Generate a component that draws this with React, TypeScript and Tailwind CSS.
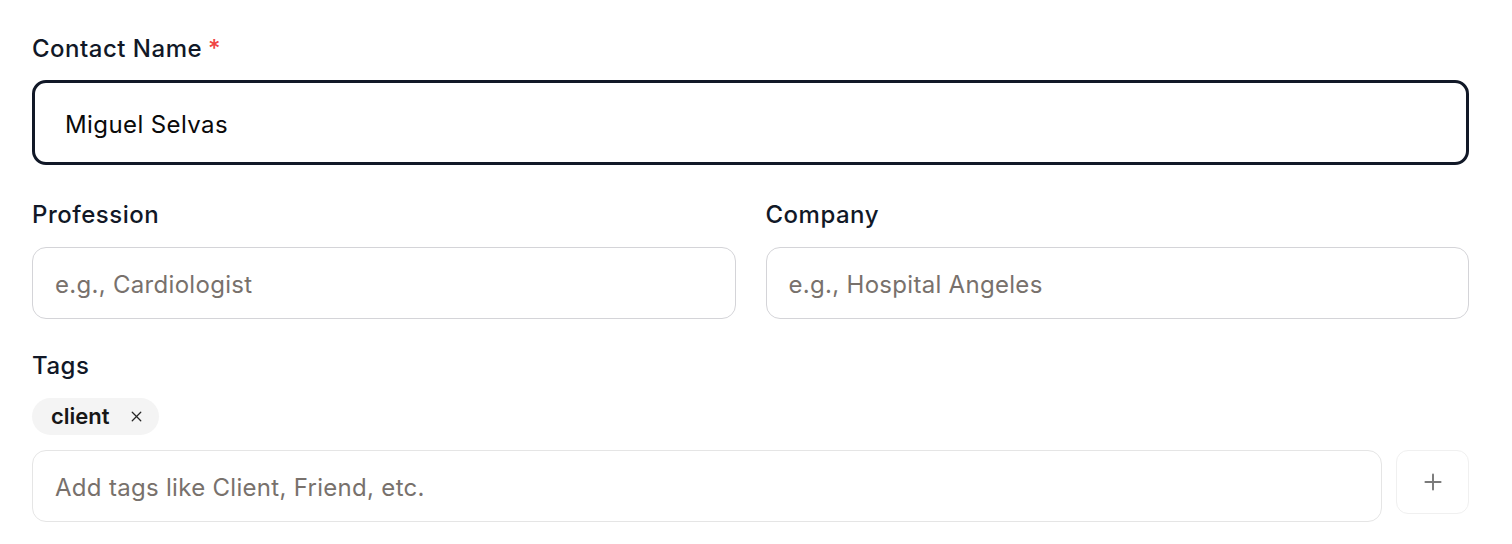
import { Plus, X } from 'lucide-react';

const font = { fontFamily: 'Inter, "Noto Sans", sans-serif' };

function Label({ children, required }: { children: React.ReactNode; required?: boolean }) {
  return (
    <label className="block text-[24px] leading-[30px] font-medium tracking-[0.5px] text-[#111827]">
      {children}
      {required && <span className="ml-[6px] text-[#ef4444]">*</span>}
    </label>
  );
}

export default function App() {
  return (
    <div style={font} className="w-[1512px] h-[544px] bg-white pl-[32px] pr-[43px] pt-[34px]">
      {/* contact name */}
      <Label required>Contact Name</Label>
      <div className="mt-[16px] h-[85px] rounded-[14px] border-[3px] border-[#111827] flex items-center pl-[30px] pt-[5px]">
        <span className="text-[24px] tracking-[0.4px] text-[#0a0a0a]">Miguel Selvas</span>
      </div>

      <div className="mt-[35px] grid grid-cols-2 gap-[30px]">
        <div>
          <Label>Profession</Label>
          <div className="mt-[17px] h-[72px] rounded-[14px] border border-[#d4d4d8] flex items-center pl-[22px] pt-[3px]">
            <span className="text-[24px] tracking-[0.3px] text-[#78716c]">e.g., Cardiologist</span>
          </div>
        </div>
        <div>
          <Label>Company</Label>
          <div className="mt-[17px] h-[72px] rounded-[14px] border border-[#d4d4d8] flex items-center pl-[22px] pt-[3px]">
            <span className="text-[24px] tracking-[0.3px] text-[#78716c]">e.g., Hospital Angeles</span>
          </div>
        </div>
      </div>

      <div className="mt-[32px]">
        <Label>Tags</Label>
        <div className="mt-[17px] flex">
          <span className="h-[37px] rounded-full bg-[#f4f4f4] pl-[19px] pr-[14px] flex items-center gap-[18px]">
            <span className="text-[22px] font-semibold text-[#171717]">client</span>
            <X size={17} strokeWidth={1.8} className="text-[#262626]" />
          </span>
        </div>
        <div className="mt-[15px] flex items-start gap-[14px]">
          <div className="flex-1 h-[72px] rounded-[14px] border border-[#e5e5e5] flex items-center pl-[22px] pt-[3px]">
            <span className="text-[24px] tracking-[0.3px] text-[#78716c]">Add tags like Client, Friend, etc.</span>
          </div>
          <button
            type="button"
            className="w-[73px] h-[64px] rounded-[12px] border border-[#f0f0f0] flex items-center justify-center text-[#7a7a7a]"
          >
            <Plus size={26} strokeWidth={1.8} />
          </button>
        </div>
      </div>
    </div>
  );
}
